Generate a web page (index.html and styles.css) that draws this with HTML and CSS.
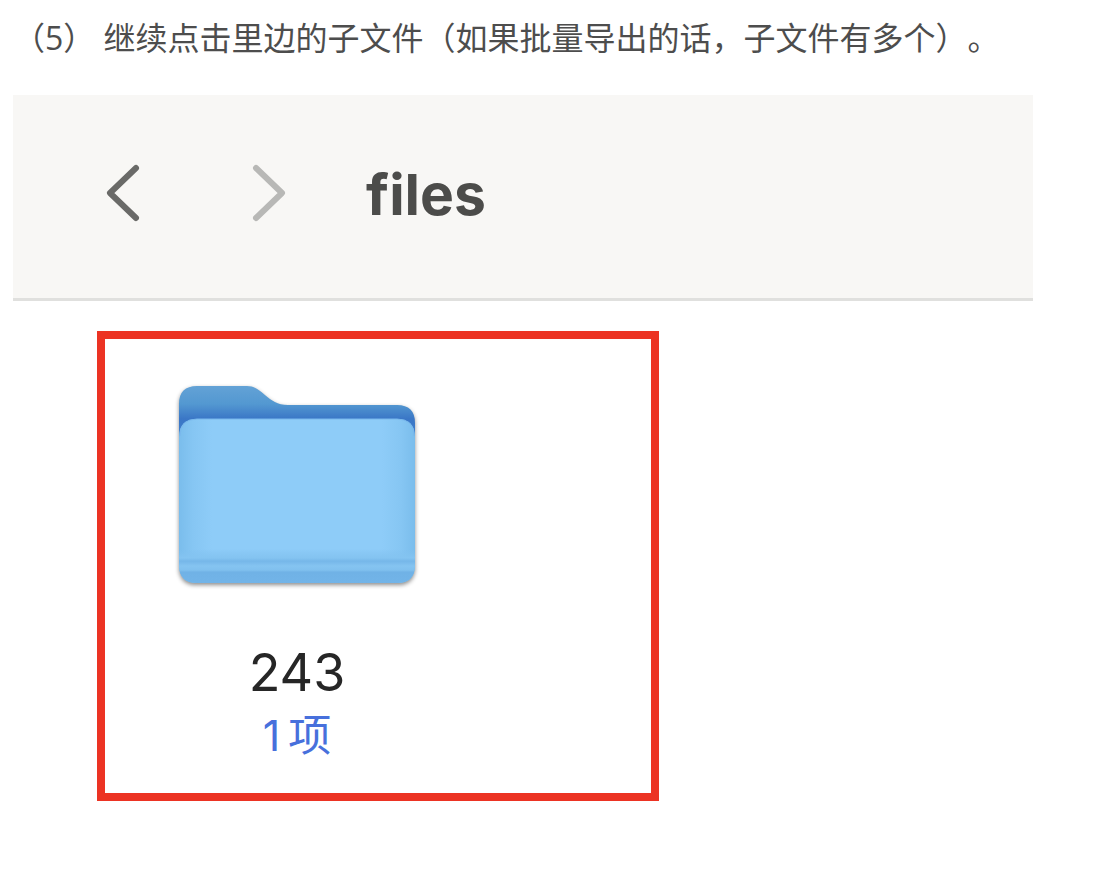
FILE: index.html
```html
<!DOCTYPE html>
<html lang="zh-CN">
<head>
    <meta charset="UTF-8">
    <meta name="viewport" content="width=device-width, initial-scale=1.0">
    <title>子文件</title>
    <link rel="stylesheet" href="styles.css">
</head>
<body>
    <p class="step">（5） 继续点击里边的子文件（如果批量导出的话，子文件有多个）。</p>

    <div class="finder">
        <div class="toolbar">
            <button class="nav-button" type="button" aria-label="后退">
                <svg width="36" height="60" viewBox="0 0 36 60">
                    <path d="M31 5 L5 30 L31 55" />
                </svg>
            </button>
            <button class="nav-button forward" type="button" aria-label="前进">
                <svg width="36" height="60" viewBox="0 0 36 60">
                    <path d="M5 5 L31 30 L5 55" />
                </svg>
            </button>
            <h1 class="title">files</h1>
        </div>

        <div class="content">
            <div class="highlight">
                <a class="folder" href="#">
                    <svg class="folder-icon" width="236" height="198" viewBox="0 0 236 198">
                        <defs>
                            <linearGradient id="back" x1="0" y1="0" x2="0" y2="1">
                                <stop offset="0" stop-color="#63a2d6" />
                                <stop offset="0.3" stop-color="#5398d1" />
                                <stop offset="0.55" stop-color="#3a76c6" />
                                <stop offset="1" stop-color="#4285d0" />
                            </linearGradient>
                            <linearGradient id="front" x1="0" y1="0" x2="1" y2="0">
                                <stop offset="0" stop-color="#7abdec" />
                                <stop offset="0.06" stop-color="#86c6f3" />
                                <stop offset="0.14" stop-color="#8eccf8" />
                                <stop offset="0.86" stop-color="#8eccf8" />
                                <stop offset="0.94" stop-color="#86c6f3" />
                                <stop offset="1" stop-color="#7abdec" />
                            </linearGradient>
                            <linearGradient id="base" x1="0" y1="0" x2="0" y2="1">
                                <stop offset="0" stop-color="#80c0ef" stop-opacity="0" />
                                <stop offset="0.26" stop-color="#84c4f1" />
                                <stop offset="0.36" stop-color="#76b7e9" />
                                <stop offset="0.5" stop-color="#85c4f1" />
                                <stop offset="0.62" stop-color="#80c0ee" />
                                <stop offset="0.68" stop-color="#70b2e6" />
                                <stop offset="1" stop-color="#72b4e8" />
                            </linearGradient>
                        </defs>
                        <path fill="url(#back)" d="M0 60 V18 Q0 0 18 0 H68 C84 0 88 19 109 19 H218 Q236 19 236 37 V60 Z" />
                        <path fill="url(#front)" d="M0 51 Q0 33 18 33 H218 Q236 33 236 51 V179 Q236 197 218 197 H18 Q0 197 0 179 Z" />
                        <path fill="url(#base)" d="M0 163 H236 V179 Q236 197 218 197 H18 Q0 197 0 179 Z" />
                        <path fill="none" stroke="#79b8ec" d="M1 50 Q1 33 18 33 H218 Q235 33 235 50" />
                    </svg>
                    <span class="name">243</span>
                    <span class="count"><span>1</span><span>项</span></span>
                </a>
            </div>
        </div>
    </div>
</body>
</html>
```
FILE: styles.css
```css
body {
    margin: 0;
    padding: 14px 64px 0 13px;
    background: #fff;
    font-family: "Open Sans", "Noto Sans CJK SC", sans-serif;
}
.step {
    margin: 0 0 33px;
    font-size: 32px;
    line-height: 48px;
    color: #4d4d4d;
    text-spacing-trim: space-all;
}
.finder {
    font-family: Inter, "Noto Sans CJK SC", sans-serif;
}
.toolbar {
    display: flex;
    align-items: center;
    height: 203px;
    padding: 0 92px;
    background: #f8f7f5;
    border-bottom: 3px solid #e0e0de;
}
.nav-button {
    display: flex;
    margin: 0 110px 8px 0;
    padding: 0;
    border: none;
    background: none;
    cursor: pointer;
}
.nav-button path {
    fill: none;
    stroke: #6a6a68;
    stroke-width: 6;
    stroke-linecap: round;
    stroke-linejoin: round;
}
.nav-button.forward {
    margin-right: 79px;
}
.nav-button.forward path {
    stroke: #b8b8b6;
}
.title {
    margin: 0 0 4px;
    font-size: 57px;
    font-weight: 700;
    line-height: 72px;
    color: #4c4c4a;
}
.content {
    padding: 30px 84px;
}
.highlight {
    width: fit-content;
    padding: 47px 236px 28px 74px;
    border: 8px solid #ec3323;
}
.folder {
    display: flex;
    flex-direction: column;
    align-items: center;
    text-decoration: none;
}
.folder-icon {
    filter: drop-shadow(0 2px 2px rgba(0, 0, 0, 0.45));
}
.name {
    margin-top: 57px;
    font-size: 52px;
    line-height: 64px;
    color: #262626;
}
.count {
    display: flex;
    gap: 8px;
    font-size: 43px;
    line-height: 60px;
    color: #4770dc;
}
```
